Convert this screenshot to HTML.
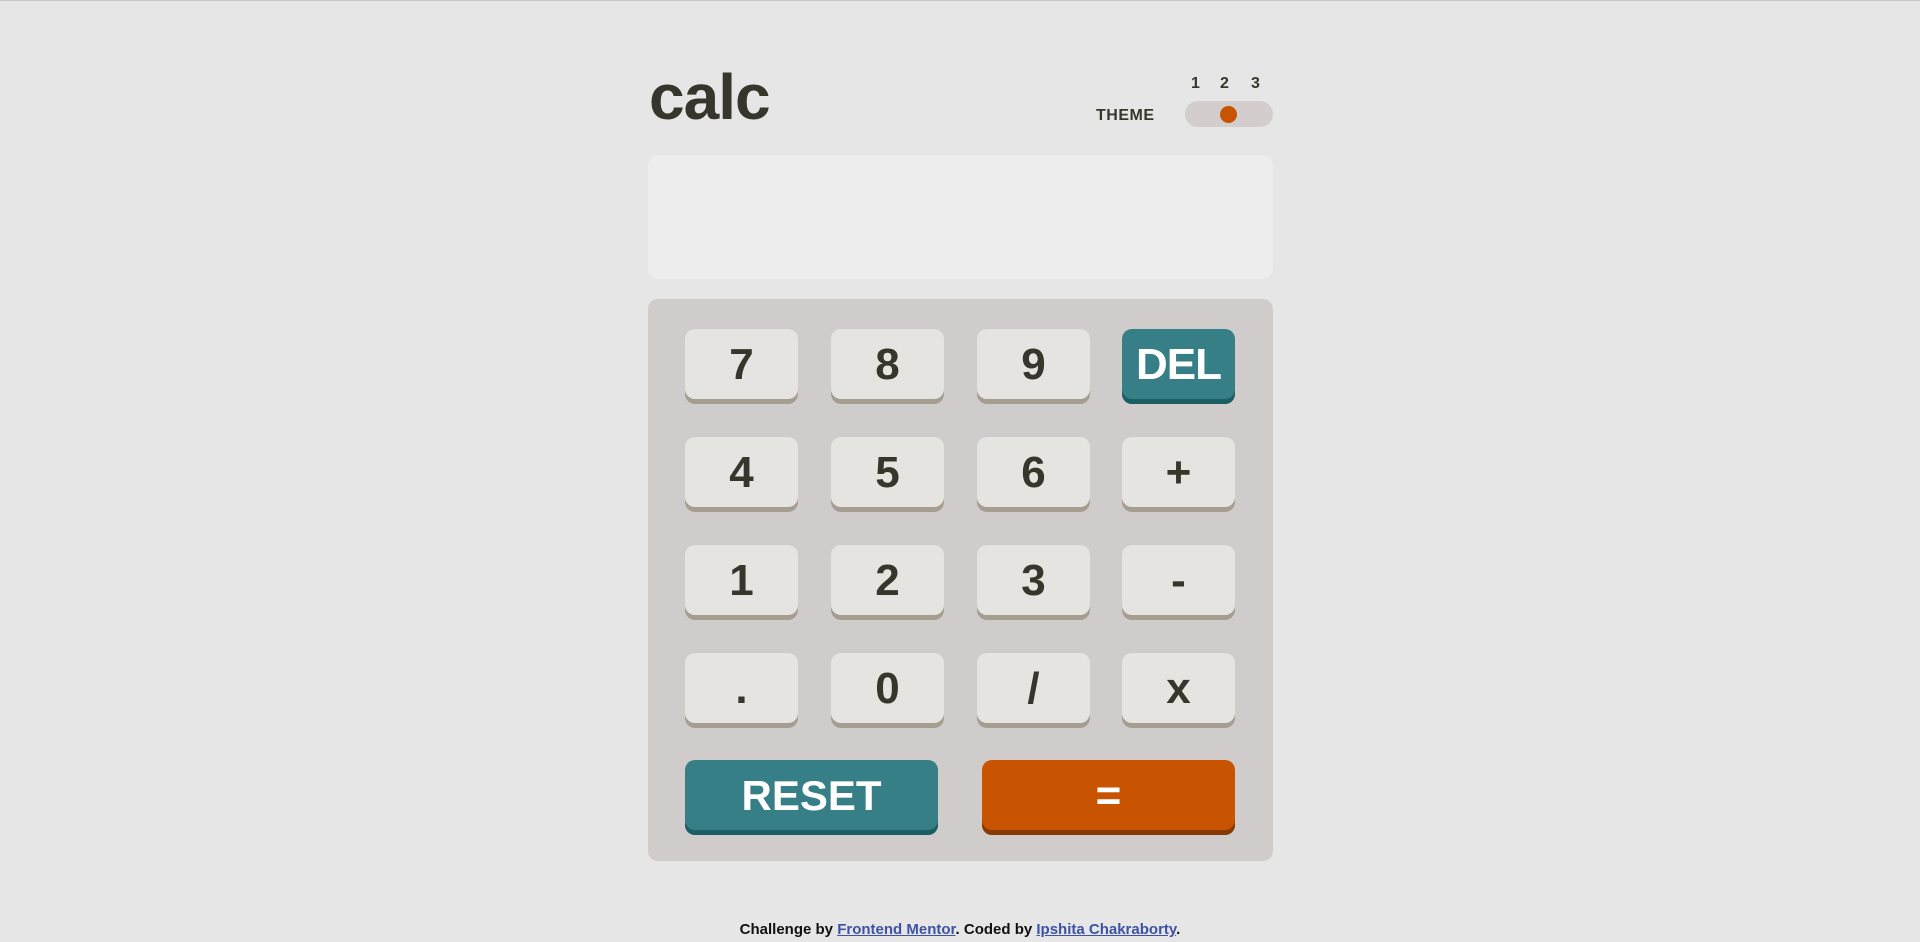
<!DOCTYPE html>
<html><head><meta charset="utf-8"><style>
*{margin:0;padding:0;box-sizing:border-box}
body{width:1920px;height:942px;background:#e6e6e6;font-family:"Liberation Sans",sans-serif;color:#36362c;position:relative;overflow:hidden;border-top:1px solid #c8c8c8}
.abs{position:absolute}
.title{left:649px;top:64px;font-size:64px;font-weight:bold;letter-spacing:-1px;line-height:1}
.theme{left:1096px;top:106px;font-size:16px;font-weight:bold;letter-spacing:0.5px}
.n{top:74px;font-size:16px;font-weight:bold}
.tog{left:1185px;top:100px;width:88px;height:26px;border-radius:13px;background:#d3cdcd}
.knob{left:1220px;top:105px;width:17px;height:17px;border-radius:50%;background:#c85402}
.disp{left:648px;top:154px;width:625px;height:124px;border-radius:10px;background:#ededed}
.pad{left:648px;top:298px;width:625px;height:562px;border-radius:10px;background:#d1cccc}
.k{position:absolute;width:113px;height:75px;border-radius:10px;background:#e5e4e1;box-shadow:inset 0 -5px 0 #a69d91;font-size:44px;font-weight:bold;text-align:center;line-height:72px;color:#36362c}
.del{background:#377f86;box-shadow:inset 0 -5px 0 #1b5f65;color:#fff}
.eq{background:#c85402;box-shadow:inset 0 -5px 0 #873901;color:#fff}
.foot{left:0;width:1920px;top:920px;text-align:center;font-size:15px;font-weight:bold;color:#111}
.foot a{color:#3e52a3;text-decoration:underline}
</style></head><body>
<div class="abs title">calc</div>
<div class="abs theme">THEME</div>
<div class="abs n" style="left:1191px">1</div>
<div class="abs n" style="left:1220px">2</div>
<div class="abs n" style="left:1251px">3</div>
<div class="abs tog"></div>
<div class="abs knob"></div>
<div class="abs disp"></div>
<div class="abs pad"></div>
<div class="k" style="left:685px;top:328px">7</div>
<div class="k" style="left:831px;top:328px">8</div>
<div class="k" style="left:977px;top:328px">9</div>
<div class="k del" style="left:1122px;top:328px;letter-spacing:-1px">DEL</div>
<div class="k" style="left:685px;top:436px">4</div>
<div class="k" style="left:831px;top:436px">5</div>
<div class="k" style="left:977px;top:436px">6</div>
<div class="k" style="left:1122px;top:436px">+</div>
<div class="k" style="left:685px;top:544px">1</div>
<div class="k" style="left:831px;top:544px">2</div>
<div class="k" style="left:977px;top:544px">3</div>
<div class="k" style="left:1122px;top:544px">-</div>
<div class="k" style="left:685px;top:652px">.</div>
<div class="k" style="left:831px;top:652px">0</div>
<div class="k" style="left:977px;top:652px">/</div>
<div class="k" style="left:1122px;top:652px">x</div>
<div class="k del" style="left:685px;top:759px;width:253px;font-size:42px">RESET</div>
<div class="k eq" style="left:982px;top:759px;width:253px">=</div>
<div class="abs foot">Challenge by <a>Frontend Mentor</a>. Coded by <a>Ipshita Chakraborty</a>.</div>
</body></html>
